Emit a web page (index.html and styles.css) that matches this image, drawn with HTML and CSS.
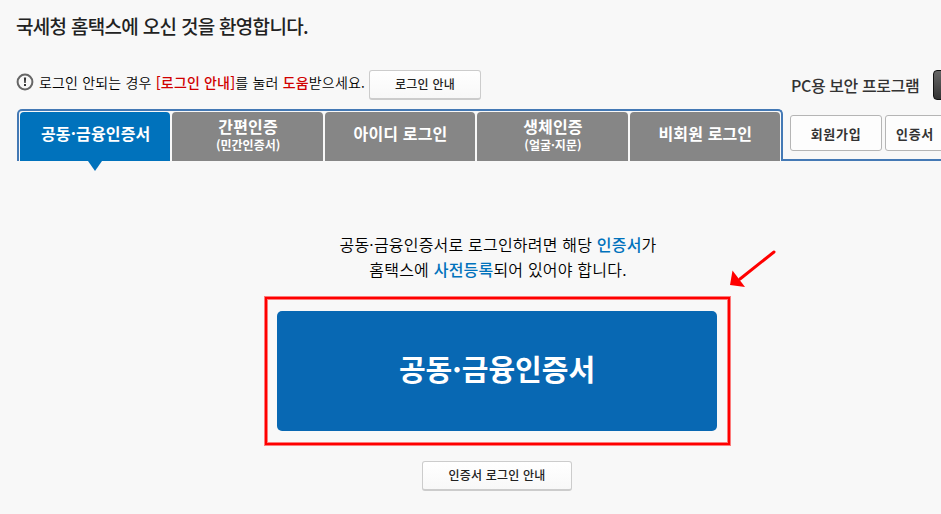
FILE: index.html
```html
<!DOCTYPE html>
<html lang="ko">
<head>
    <meta charset="UTF-8">
    <meta name="viewport" content="width=device-width, initial-scale=1.0">
    <title>국세청 홈택스</title>
    <link rel="stylesheet" href="styles.css">
</head>
<body>
    <h1 class="title">국세청 홈택스에 오신 것을 환영합니다.</h1>

    <div class="top">
        <div class="login-area">
            <div class="notice">
                <svg class="notice-icon" width="18" height="18" viewBox="0 0 18 18">
                    <circle cx="9" cy="9" r="7.400" fill="none" stroke="#666" stroke-width="2"/>
                    <path d="M7.900 4.500h2.200l-.4 5.400H8.300z" fill="#333"/>
                    <rect x="8" y="11" width="2" height="2" fill="#333"/>
                </svg>
                <p class="notice-text">로그인 안되는 경우 <span class="red">[로그인 안내]</span>를 눌러 <span class="red">도움</span>받으세요.</p>
                <button class="btn">로그인 안내</button>
            </div>
            <ul class="tabs">
                <li class="tab on"><span>공동·금융인증서</span></li>
                <li class="tab two"><span>간편인증</span><small>(민간인증서)</small></li>
                <li class="tab"><span>아이디 로그인</span></li>
                <li class="tab two"><span>생체인증</span><small>(얼굴·지문)</small></li>
                <li class="tab"><span>비회원 로그인</span></li>
            </ul>
        </div>
        <div class="side">
            <div class="security">
                <span class="security-text">PC용 보안 프로그램</span>
                <button class="btn-dark"></button>
            </div>
            <div class="side-menu">
                <button class="btn-side">회원가입</button>
                <button class="btn-side cert">인증서</button>
            </div>
        </div>
    </div>

    <div class="content">
        <p class="guide">공동·금융인증서로 로그인하려면 해당 <span class="blue">인증서</span>가<br>홈택스에 <span class="blue">사전등록</span>되어 있어야 합니다.</p>
        <div class="mark">
            <button class="btn-login">공동·금융인증서</button>
            <svg class="arrow" width="50" height="42" viewBox="0 0 50 42">
                <path d="M46 3L12 30" stroke="#f00" stroke-width="3" stroke-linecap="round"/>
                <path d="M2 36L4.500 21.500L17 38z" fill="#f00"/>
            </svg>
        </div>
        <button class="btn btn-guide">인증서 로그인 안내</button>
    </div>
</body>
</html>
```

FILE: styles.css
```css
* {
    box-sizing: border-box;
}

body {
    margin: 0;
    height: 514px;
    overflow: hidden;
    background-color: #f8f8f8;
    color: #000;
    font-family: "Noto Sans CJK KR", sans-serif;
}

button {
    padding: 0;
    font-family: inherit;
    white-space: nowrap;
}

.title {
    margin: 0;
    padding: 12px 0 0 16px;
    height: 69px;
    font-size: 19px;
    line-height: 28px;
    font-weight: 500;
    letter-spacing: -0.7px;
    color: #222;
}

.top {
    display: flex;
    padding-left: 17px;
}

.login-area {
    flex: none;
    width: 766px;
}

.notice {
    display: flex;
    height: 40px;
}

.notice-icon {
    margin: 4px 5px 0 -1px;
}

.notice-text {
    margin: 0 4px 0 0;
    width: 326px;
    font-size: 14px;
    line-height: 26px;
    font-weight: 350;
    letter-spacing: 0.17px;
    white-space: nowrap;
}

.red {
    color: #d00000;
    font-weight: 500;
}

.btn {
    width: 112px;
    height: 30px;
    margin-top: 1px;
    padding-bottom: 2px;
    border: 1px solid #ccc;
    border-bottom-width: 2px;
    border-radius: 3px;
    background: linear-gradient(#fff, #f8f8f8);
    font-size: 12px;
    line-height: 16px;
    font-weight: 500;
    letter-spacing: 0.2px;
    color: #222;
}

.tabs {
    display: flex;
    gap: 2px;
    margin: 0;
    padding: 1px 1px 0;
    height: 52px;
    list-style: none;
    border: 2px solid #4479b5;
    border-bottom: 0;
    border-radius: 5px 5px 0 0;
}

.tab {
    position: relative;
    display: flex;
    flex: 1;
    flex-direction: column;
    align-items: center;
    padding: 10px 0 0 1px;
    border-radius: 4px 4px 0 0;
    background-color: #868686;
    color: #fff;
    font-size: 16px;
    line-height: 22px;
    font-weight: 700;
    letter-spacing: 0.15px;
}

.two {
    padding-top: 3px;
}

.tab small {
    font-size: 12px;
    line-height: 16px;
    letter-spacing: 0;
}

.on {
    background-color: #0072bc;
}

.on::after {
    content: "";
    position: absolute;
    left: 68px;
    top: 49px;
    border: 7px solid transparent;
    border-top: 10px solid #0072bc;
    border-bottom: 0;
}

.side {
    display: flex;
    flex: 1;
    flex-direction: column;
    min-width: 0;
    overflow: hidden;
    border-bottom: 2px solid #4479b5;
}

.security {
    display: flex;
    height: 46px;
    padding-left: 8px;
}

.security-text {
    flex: none;
    width: 142px;
    font-size: 16px;
    line-height: 32px;
    font-weight: 500;
    letter-spacing: -0.4px;
    color: #333;
}

.btn-dark {
    flex: none;
    width: 60px;
    height: 30px;
    margin-top: 1px;
    border: 1px solid #111;
    border-radius: 4px;
    background: linear-gradient(#666, #333);
}

.side-menu {
    display: flex;
    gap: 3px;
    padding-left: 7px;
}

.btn-side {
    flex: none;
    width: 92px;
    height: 36px;
    border: 1px solid #b5b5b5;
    border-radius: 3px;
    background-color: #fdfdfd;
    font-size: 13px;
    font-weight: 700;
    letter-spacing: 0.7px;
    color: #333;
}

.cert {
    padding-left: 10px;
    text-align: left;
}

.content {
    display: flex;
    flex-direction: column;
    align-items: center;
    padding: 71px 0 0 53px;
}

.guide {
    margin: 0;
    padding-left: 2px;
    font-size: 16px;
    line-height: 24.5px;
    font-weight: 350;
    letter-spacing: 0.2px;
    text-align: center;
}

.blue {
    color: #0072bc;
    font-weight: 500;
}

.mark {
    position: relative;
    width: 465px;
    height: 148px;
    margin: 16px 0 0 1px;
    padding: 12px 10px;
    border: 2px solid #f00;
    box-shadow: 0 0 0 1px rgba(255, 0, 0, 0.5), inset 0 0 0 1px rgba(255, 0, 0, 0.5);
}

.btn-login {
    display: block;
    width: 440px;
    height: 120px;
    padding-bottom: 7px;
    border: 0;
    border-radius: 5px;
    background-color: #0868b3;
    color: #fff;
    font-size: 29px;
    font-weight: 700;
}

.arrow {
    position: absolute;
    left: 461px;
    top: -50px;
}

.btn-guide {
    width: 150px;
    margin-top: 16px;
}
```
